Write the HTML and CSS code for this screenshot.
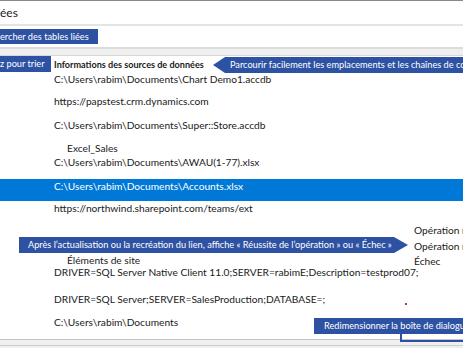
FILE: index.html
```html
<!DOCTYPE html>
<html lang="fr">

<head>
    <meta charset="utf-8">
    <meta name="viewport" content="width=device-width, initial-scale=1.0">
    <title>Gestionnaire de tables liées</title>
    <link rel="stylesheet" href="styles.css">
</head>

<body>
    <div class="window">
        <header class="titlebar">ées</header>
        <div class="searchbar"></div>
        <div class="list-top"></div>

        <section class="list">
            <div class="list-head">Informations des sources de données</div>
            <div class="row h22">C:\Users\rabim\Documents\Chart Demo1.accdb</div>
            <div class="row h24">https://papstest.crm.dynamics.com</div>
            <div class="row h23">C:\Users\rabim\Documents\Super::Store.accdb</div>
            <div class="row h38">
                <div class="sub">Excel_Sales</div>
                <div>C:\Users\rabim\Documents\AWAU(1-77).xlsx</div>
            </div>
            <div class="row h22 selected">C:\Users\rabim\Documents\Accounts.xlsx</div>
            <div class="row h22">https://northwind.sharepoint.com/teams/ext</div>
            <div class="row h69 split">
                <div class="site">
                    <div class="sub">Éléments de site</div>
                    <div class="driver">DRIVER=SQL Server Native Client 11.0;SERVER=rabimE;Description=testprod07;</div>
                </div>
                <div class="status">
                    <div>Opération réussie</div>
                    <div>Opération réussie</div>
                    <div>Échec</div>
                </div>
            </div>
            <div class="row h23">DRIVER=SQL Server;SERVER=SalesProduction;DATABASE=;<span class="dot"></span></div>
            <div class="row h24">C:\Users\rabim\Documents</div>
        </section>

        <footer class="footer"></footer>

        <!-- annotations -->
        <div class="callout search">ercher des tables liées</div>
        <div class="callout sort">z pour trier</div>
        <div class="callout browse arrow-left">Parcourir facilement les emplacements et les chaînes de connexion</div>
        <div class="callout refresh arrow-right">Après l’actualisation ou la recréation du lien, affiche « Réussite de l’opération » ou « Échec »</div>
        <div class="callout resize">Redimensionner la boîte de dialogue</div>
        <div class="connector"></div>
    </div>
</body>

</html>
```

FILE: styles.css
```css
body {
    margin: 0;
    background-color: #fff;
    font-family: Lato, "Open Sans", sans-serif;
    font-size: 10.2px;
    color: #1a1a1a;
}

.window {
    position: relative;
    width: 463px;
    height: 348px;
    overflow: hidden;
}

.titlebar {
    height: 23px;
    line-height: 24px;
    border-top: 1px solid #8a8a8a;
    border-bottom: 2px solid #e4e4e4;
    font-size: 12px;
    white-space: nowrap;
}

.searchbar {
    height: 21px;
}

.list-top {
    height: 6px;
    border-top: 2px solid #dcdcdc;
    background-color: #efefef;
}

.list-head {
    height: 17px;
    line-height: 17px;
    padding-left: 54px;
    font-weight: 700;
    font-size: 9.1px;
    border-top: 1px solid #d6d6d6;
    box-sizing: border-box;
}

.row {
    padding-left: 54px;
    line-height: 14px;
    white-space: nowrap;
    box-sizing: border-box;
}

.h22 { height: 22px; }
.h23 { height: 23px; }
.h24 { height: 24px; }
.h38 { height: 38px; }
.h69 { height: 69px; }

.sub {
    padding-left: 13px;
}

.selected {
    background-color: #0078d7;
    color: #fff;
}

.split {
    display: grid;
    grid-template-columns: 360px 49px;
}

.site {
    padding-top: 30px;
}

.site .driver {
    margin-top: -2px;
}

.status div {
    height: 15.5px;
    overflow: hidden;
}

.dot {
    display: inline-block;
    width: 2px;
    height: 2px;
    margin-left: 80px;
    background-color: #b0307a;
    vertical-align: -2px;
}

.footer {
    height: 9px;
    border-top: 1px solid #c4c4c4;
    background-color: #f0f0f0;
    box-shadow: inset 0 -3px 0 #f0f0f0, inset 0 -4px 0 #cfcfcf;
}

.callout {
    position: absolute;
    height: 16px;
    line-height: 16px;
    background-color: #2e52a3;
    color: #fff;
    font-size: 9.2px;
    white-space: nowrap;
    overflow: hidden;
}

.search {
    top: 29px;
    left: 0;
    width: 98px;
    height: 15px;
    line-height: 15px;
}

.sort {
    top: 56px;
    left: 0;
    width: 51px;
}

.browse {
    top: 57px;
    left: 225px;
    right: -200px;
    padding-left: 5px;
    overflow: visible;
}

.refresh {
    top: 237px;
    left: 19px;
    width: 366px;
    padding-left: 9px;
    overflow: visible;
}

.arrow-left::before {
    content: "";
    position: absolute;
    left: -12px;
    top: 0;
    border-top: 8px solid transparent;
    border-bottom: 8px solid transparent;
    border-right: 12px solid #2e52a3;
}

.arrow-right::after {
    content: "";
    position: absolute;
    right: -14px;
    top: 0;
    border-top: 8px solid transparent;
    border-bottom: 8px solid transparent;
    border-left: 14px solid #2e52a3;
}

.resize {
    top: 318px;
    left: 314px;
    right: 0;
    padding-left: 10px;
}

.connector {
    position: absolute;
    top: 334px;
    left: 400px;
    right: 0;
    height: 6px;
    border-left: 2px solid #2e52a3;
    border-bottom: 2px solid #2e52a3;
}
```
